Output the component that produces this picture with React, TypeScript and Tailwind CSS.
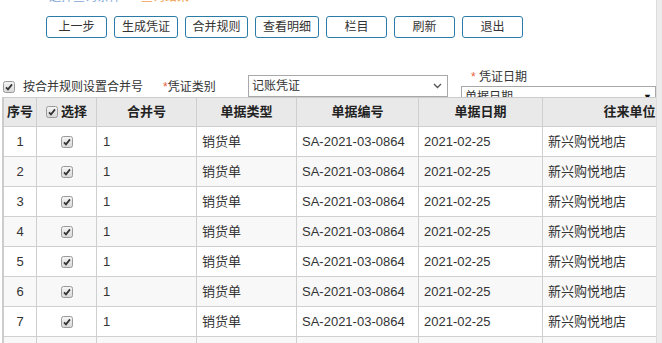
import React from "react";

function Check() {
  return (
    <svg width="12" height="12" viewBox="0 0 12 12" className="block shrink-0">
      <defs>
        <linearGradient id="cbg" x1="0" y1="0" x2="0" y2="1">
          <stop offset="0" stopColor="#f6f6f6" />
          <stop offset="1" stopColor="#d6d6d6" />
        </linearGradient>
      </defs>
      <rect x="0.5" y="0.5" width="11" height="11" rx="2" fill="url(#cbg)" stroke="#9a9a9a" />
      <path d="M3 6.3 L5 8.4 L9 3.4" fill="none" stroke="#333" strokeWidth="1.7" />
    </svg>
  );
}

const buttons: { label: string; w: string }[] = [
  { label: "上一步", w: "w-[61px]" },
  { label: "生成凭证", w: "w-[64px]" },
  { label: "合并规则", w: "w-[63px]" },
  { label: "查看明细", w: "w-[64px]" },
  { label: "栏目", w: "w-[61px]" },
  { label: "刷新", w: "w-[61px]" },
  { label: "退出", w: "w-[61px]" },
];

const rows = [1, 2, 3, 4, 5, 6, 7, 8];

export default function App() {
  return (
    <div className="flex w-[662px] h-[343px] overflow-hidden bg-white font-['Liberation_Sans','Noto_Sans_CJK_SC',sans-serif] text-[#333]">
      <div className="w-[656px] shrink-0 overflow-hidden flex flex-col">
        {/* cut-off title line */}
        <div className="h-[16px] shrink-0 overflow-hidden">
          <div className="mt-[-9px] flex pl-[49px] text-[12px] leading-[12px]">
            <span className="text-[#7fa6d6]">选择查询条件</span>
            <span className="ml-[20px] text-[#f0a050]">查询结果</span>
          </div>
        </div>

        {/* buttons */}
        <div className="h-[22px] shrink-0 flex gap-[7px] pl-[46px]">
          {buttons.map((b) => (
            <div
              key={b.label}
              className={`${b.w} h-[22px] flex items-center justify-center rounded-[3px] border border-[#2a7ca6] bg-white text-[12px] leading-[14px] text-[#333]`}
            >
              {b.label}
            </div>
          ))}
        </div>

        {/* filter area */}
        <div className="h-[59px] shrink-0 overflow-hidden flex items-start text-[12px]">
          <div className="w-[163px] shrink-0 pl-[3px] mt-[42px] h-[14px] flex items-center">
            <Check />
            <span className="ml-[8px] leading-[14px] text-[#333]">按合并规则设置合并号</span>
          </div>
          <div className="w-[85px] shrink-0 mt-[42px] h-[14px] leading-[14px] text-[#333]">
            <span className="text-[#e8603c]">*</span>凭证类别
          </div>
          <div className="w-[200px] shrink-0 mt-[37px] h-[22px] border border-[#a8a8a8] bg-white flex items-center pl-[3px] pr-[5px] leading-[14px] text-[#333]">
            <span className="flex-1">记账凭证</span>
            <svg width="9" height="6" viewBox="0 0 9 6" className="block">
              <path d="M1 1 L4.5 4.5 L8 1" fill="none" stroke="#555" strokeWidth="1.4" />
            </svg>
          </div>
          <div className="ml-[13px] flex-1 mt-[32px] flex flex-col">
            <div className="h-[14px] leading-[14px] pl-[10px] text-[#333]">
              <span className="text-[#e8603c]">*</span> 凭证日期
            </div>
            <div className="mt-[2px] h-[22px] border border-[#a8a8a8] bg-white flex items-center pl-[3px] pr-[3px] leading-[14px] text-[#333]">
              <span className="flex-1">单据日期</span>
              <span className="text-[9px] text-[#111]">▼</span>
            </div>
          </div>
        </div>

        {/* table */}
        <div className="ml-[2px] border-t border-l-2 border-[#cccccc] w-[720px] text-[13px]">
          <div className="flex h-[29px] bg-[#e9e9e9] border-b border-[#cfcfcf] font-bold text-[#222] leading-[16px]">
            <div className="w-[33px] shrink-0 border-r border-[#cfcfcf] flex items-center justify-center">序号</div>
            <div className="w-[60px] shrink-0 border-r border-[#cfcfcf] flex items-center justify-center gap-[3px]">
              <Check />
              <span>选择</span>
            </div>
            <div className="w-[100px] shrink-0 border-r border-[#cfcfcf] flex items-center justify-center">合并号</div>
            <div className="w-[100px] shrink-0 border-r border-[#cfcfcf] flex items-center justify-center">单据类型</div>
            <div className="w-[122px] shrink-0 border-r border-[#cfcfcf] flex items-center justify-center">单据编号</div>
            <div className="w-[124px] shrink-0 border-r border-[#cfcfcf] flex items-center justify-center">单据日期</div>
            <div className="w-[200px] shrink-0 border-r border-[#cfcfcf] flex items-center justify-center">往来单位名称</div>
          </div>
          {rows.map((n) => (
            <div
              key={n}
              className={`flex h-[30px] border-b border-[#cfcfcf] leading-[16px] text-[#333] ${n % 2 === 0 ? "bg-[#f8f8f8]" : "bg-white"}`}
            >
              <div className="w-[33px] shrink-0 border-r border-[#cfcfcf] flex items-center justify-center">{n}</div>
              <div className="w-[60px] shrink-0 border-r border-[#cfcfcf] flex items-center justify-center">
                <Check />
              </div>
              <div className="w-[100px] shrink-0 border-r border-[#cfcfcf] flex items-center pl-[6px]">1</div>
              <div className="w-[100px] shrink-0 border-r border-[#cfcfcf] flex items-center pl-[5px]">销货单</div>
              <div className="w-[122px] shrink-0 border-r border-[#cfcfcf] flex items-center pl-[5px]">SA-2021-03-0864</div>
              <div className="w-[124px] shrink-0 border-r border-[#cfcfcf] flex items-center pl-[5px]">2021-02-25</div>
              <div className="w-[200px] shrink-0 border-r border-[#cfcfcf] flex items-center pl-[5px]">新兴购悦地店</div>
            </div>
          ))}
        </div>
      </div>
      <div className="w-[6px] shrink-0 bg-[#ececec] border-l border-[#dddddd]" />
    </div>
  );
}
